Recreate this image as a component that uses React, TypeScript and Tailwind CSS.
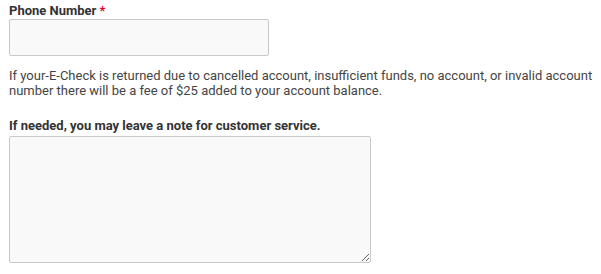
export default function App() {
  return (
    <div className="bg-white w-[601px] h-[274px] px-[9px] pt-[3px] font-['Roboto',sans-serif] text-[#333]">
      <label className="block text-[13px] font-bold leading-[16px]">
        Phone Number <span className="text-[#e4002b]">*</span>
      </label>
      <input
        type="text"
        className="block w-[260px] h-[37px] bg-[#f9f9f9] border border-[#c8c8c8] rounded-[2px] outline-none"
      />
      <p className="mt-[12px] text-[13px] leading-[15px] text-[#444] whitespace-nowrap">
        If your-E-Check is returned due to cancelled account, insufficient funds, no account, or invalid account
        <br />
        number there will be a fee of $25 added to your account balance.
      </p>
      <label className="block mt-[20px] text-[13px] font-bold leading-[16px]">
        If needed, you may leave a note for customer service.
      </label>
      <textarea className="block mt-[2px] w-[362px] h-[127px] bg-[#f9f9f9] border border-[#c8c8c8] rounded-[2px] outline-none" />
    </div>
  );
}
